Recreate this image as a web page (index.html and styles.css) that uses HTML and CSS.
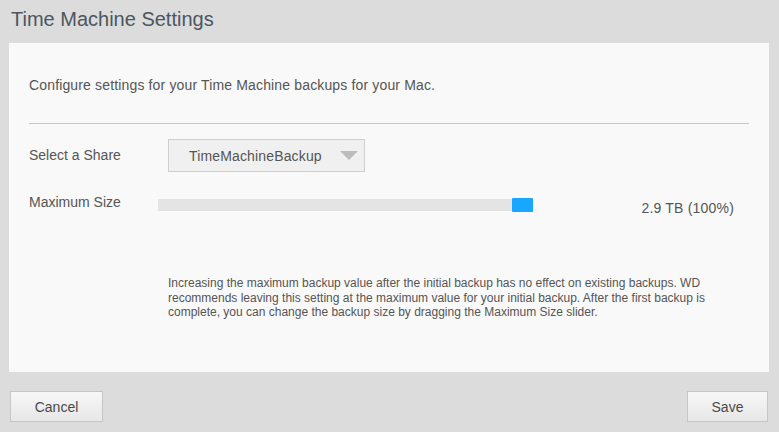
FILE: index.html
```html
<!DOCTYPE html>
<html lang="en">
<head>
    <meta charset="UTF-8">
    <title>Time Machine Settings</title>
    <link rel="stylesheet" href="styles.css">
</head>
<body>

<h1 class="title">Time Machine Settings</h1>

<div class="panel">
    <p class="intro">Configure settings for your Time Machine backups for your Mac.</p>
    <hr class="divider">

    <div class="row share-row">
        <span class="label">Select a Share</span>
        <div class="select">
            <span class="select-text">TimeMachineBackup</span>
            <span class="arrow"></span>
        </div>
    </div>

    <div class="row size-row">
        <span class="label">Maximum Size</span>
        <div class="slider">
            <div class="track"></div>
            <div class="handle"></div>
        </div>
        <span class="size-value">2.9 TB (100%)</span>
    </div>

    <p class="note">Increasing the maximum backup value after the initial backup has no effect on existing backups. WD recommends leaving this setting at the maximum value for your initial backup. After the first backup is complete, you can change the backup size by dragging the Maximum Size slider.</p>
</div>

<div class="footer">
    <button class="btn">Cancel</button>
    <button class="btn save">Save</button>
</div>

</body>
</html>
```

FILE: styles.css
```css
body {
    font-family: "Liberation Sans", Arial, sans-serif;
    background-color: #dcdcdc;
    margin: 0;
    color: #555;
    width: 779px;
    height: 432px;
    overflow: hidden;
}
.title {
    margin: 0;
    height: 43px;
    padding: 6px 0 0 11px;
    box-sizing: border-box;
    font-size: 20px;
    font-weight: normal;
    color: #4b5661;
    line-height: 26px;
}
.panel {
    background-color: #f9f9f9;
    margin: 0 10px 0 9px;
    height: 329px;
    box-sizing: border-box;
    padding: 77px 20px 0 20px;
}
.intro {
    margin: 0;
    font-size: 14px;
    line-height: 16px;
    letter-spacing: 0.15px;
    margin-top: -43px;
    color: #555;
}
.divider {
    border: none;
    border-top: 1px solid #c8c8c8;
    margin: 30px 0 0 0;
    height: 0;
}
.row {
    display: flex;
    align-items: flex-start;
}
.label {
    font-size: 14px;
    line-height: 16px;
    color: #555;
}
.share-row {
    margin-top: 15px;
}
.share-row .label {
    width: 139px;
    margin-top: 8px;
}
.select {
    width: 197px;
    height: 33px;
    box-sizing: border-box;
    border: 1px solid #cfcfcf;
    background-color: #f0f0f0;
    display: flex;
    align-items: center;
    padding-left: 20px;
}
.select-text {
    font-size: 14px;
    letter-spacing: 0.15px;
    color: #555;
    width: 151px;
}
.arrow {
    width: 0;
    height: 0;
    border-left: 9px solid transparent;
    border-right: 9px solid transparent;
    border-top: 9px solid #bcbcbc;
}
.size-row {
    margin-top: 22px;
}
.size-row .label {
    width: 129px;
    margin-top: 0;
}
.slider {
    position: relative;
    width: 375px;
    height: 14px;
    margin-top: 4px;
}
.track {
    margin-top: 1px;
    width: 365px;
    height: 12px;
    background-color: #e4e4e4;
}
.handle {
    position: absolute;
    left: 354px;
    top: 0;
    width: 21px;
    height: 14px;
    background-color: #19a6ff;
    border-radius: 1px;
}
.size-value {
    margin-left: auto;
    margin-right: 15px;
    margin-top: 6px;
    font-size: 14px;
    line-height: 16px;
    letter-spacing: 0.2px;
    color: #555;
}
.note {
    margin: 60px 0 0 139px;
    width: 555px;
    font-size: 12px;
    line-height: 14.5px;
    color: #555;
}
.footer {
    display: flex;
    justify-content: space-between;
    padding: 19px 11px 0 10px;
}
.btn {
    font-family: "Liberation Sans", Arial, sans-serif;
    font-size: 14px;
    color: #4a4a4a;
    height: 31px;
    border: 1px solid #c6c6c6;
    background: linear-gradient(#f7f7f7, #e7e7e7);
    padding: 0;
    width: 93px;
}
.save {
    width: 81px;
}
```
